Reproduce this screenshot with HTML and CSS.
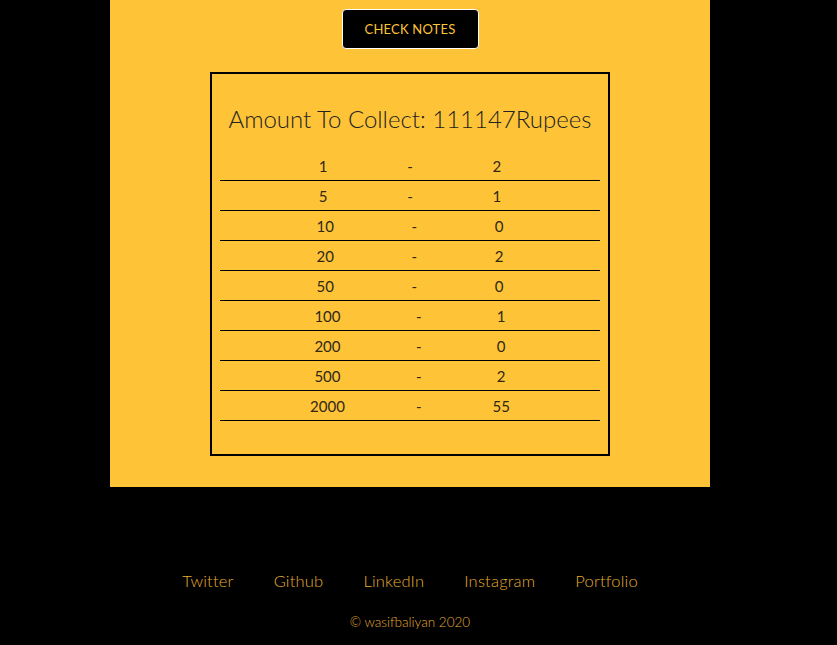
FILE: index.html
```html
<!DOCTYPE html>
<html>
<head>
<meta charset="utf-8">
<link rel="stylesheet" href="styles.css">
</head>
<body>
<div class="page">
  <main class="panel">
    <button class="check-btn">CHECK NOTES</button>
    <section class="result">
      <h2 class="amount">Amount To Collect: 111147Rupees</h2>
      <div class="rows">
        <div class="row"><span>1</span><span>-</span><span>2</span></div>
        <div class="row"><span>5</span><span>-</span><span>1</span></div>
        <div class="row"><span>10</span><span>-</span><span>0</span></div>
        <div class="row"><span>20</span><span>-</span><span>2</span></div>
        <div class="row"><span>50</span><span>-</span><span>0</span></div>
        <div class="row"><span>100</span><span>-</span><span>1</span></div>
        <div class="row"><span>200</span><span>-</span><span>0</span></div>
        <div class="row"><span>500</span><span>-</span><span>2</span></div>
        <div class="row"><span>2000</span><span>-</span><span>55</span></div>
      </div>
    </section>
  </main>
  <footer class="footer">
    <nav class="links">
      <a href="#">Twitter</a>
      <a href="#">Github</a>
      <a href="#">LinkedIn</a>
      <a href="#">Instagram</a>
      <a href="#">Portfolio</a>
    </nav>
    <p class="copy">© wasifbaliyan 2020</p>
  </footer>
</div>
</body>
</html>
```

FILE: styles.css
```css
html, body {
  margin: 0;
  padding: 0;
  background: #000;
}
body {
  font-family: Lato, "Open Sans", sans-serif;
  font-weight: 300;
}
.page {
  width: 820px;
  display: flex;
  flex-direction: column;
  align-items: center;
}
.panel {
  width: 600px;
  background: #fec336;
  display: flex;
  flex-direction: column;
  align-items: center;
  padding: 9px 0 31px;
  box-sizing: border-box;
}
.check-btn {
  width: 137px;
  height: 40px;
  background: #000;
  color: #fec336;
  border: 1px solid #fff;
  border-radius: 4px;
  font-family: Lato, sans-serif;
  font-weight: 400;
  font-size: 13px;
  letter-spacing: 0.2px;
  cursor: pointer;
}
.result {
  margin-top: 23px;
  width: 400px;
  box-sizing: border-box;
  border: 2px solid #000;
  padding: 8px 8px 33px;
}
.amount {
  margin: 22px 0 17px;
  text-align: center;
  font-weight: 300;
  font-size: 24px;
  color: #222;
  line-height: 30px;
}
.rows {
  display: flex;
  flex-direction: column;
}
.row {
  height: 30px;
  box-sizing: border-box;
  border-bottom: 1px solid #000;
  padding: 0 19px;
  display: flex;
  justify-content: space-evenly;
  align-items: center;
  font-size: 15px;
  font-weight: 400;
  color: #2e2816;
}
.footer {
  margin-top: 84px;
  display: flex;
  flex-direction: column;
  align-items: center;
}
.links {
  display: flex;
  gap: 40px;
}
.links a {
  color: #e6ac32;
  text-decoration: none;
  font-size: 16.5px;
  letter-spacing: 0.2px;
  font-weight: 300;
}
.copy {
  margin: 23px 0 0;
  color: #e6ac32;
  font-size: 13.5px;
  font-weight: 300;
}
```
